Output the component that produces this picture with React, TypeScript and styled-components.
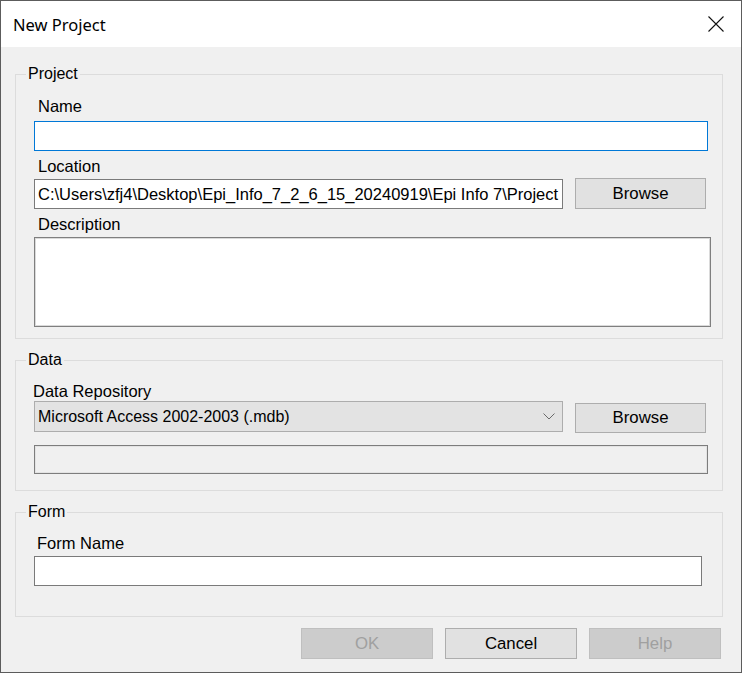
import React from "react";
import styled, { createGlobalStyle } from "styled-components";

const Global = createGlobalStyle`
  html, body { margin: 0; padding: 0; background: #ffffff; }
  * { box-sizing: border-box; }
`;

const Window = styled.div`
  width: 742px;
  height: 673px;
  border: 1px solid #5c5c5c;
  background: #f0f0f0;
  display: flex;
  flex-direction: column;
  font-family: "Liberation Sans", Arial, sans-serif;
  font-size: 16.5px;
  color: #000;
`;

const TitleBar = styled.div`
  height: 46px;
  flex: none;
  background: #ffffff;
  display: flex;
  align-items: center;
  justify-content: space-between;
  padding: 0 17px 0 12px;
`;

const Title = styled.span`
  font-family: "Noto Sans", "Open Sans", sans-serif;
  font-size: 16.5px;
  color: #000;
`;

const CloseIcon = styled.svg`
  width: 16px;
  height: 16px;
  display: block;
`;

const Content = styled.div`
  flex: 1;
  display: flex;
  flex-direction: column;
  padding: 18px 18px 13px 14px;
`;

const GroupBox = styled.fieldset<{ $gap?: number }>`
  margin: ${(p) => p.$gap ?? 0}px 0 0 0;
  padding: 0;
  border: 1px solid #dcdcdc;
  min-width: 0;
`;

const Legend = styled.legend`
  margin-left: 10px;
  padding: 0 2px;
  font-size: 16px;
  line-height: 18px;
`;

const GroupBody = styled.div<{ $bottom: number }>`
  display: flex;
  flex-direction: column;
  align-items: flex-start;
  padding: 0 0 ${(p) => p.$bottom}px 18px;
`;

const Label = styled.div<{ $top: number; $indent: number }>`
  margin-top: ${(p) => p.$top}px;
  margin-left: ${(p) => p.$indent}px;
  line-height: 18px;
  height: 18px;
  white-space: nowrap;
`;

const TextBox = styled.input<{ $top: number; $w: number; $focus?: boolean }>`
  margin: ${(p) => p.$top}px 0 0 0;
  width: ${(p) => p.$w}px;
  height: 30px;
  border: 1px solid ${(p) => (p.$focus ? "#0078d7" : "#7a7a7a")};
  background: #ffffff;
  padding: 0 0 0 3px;
  font-family: "Liberation Sans", Arial, sans-serif;
  font-size: 16.5px;
  color: #000;
  outline: none;
`;

const DisabledBox = styled.div`
  margin-top: 12px;
  width: 674px;
  height: 29px;
  border: 1px solid #7d7d7d;
  box-shadow: inset 0 0 0 1px #e3e3e3;
  background: #f0f0f0;
`;

const TextArea = styled.textarea`
  margin: 4px 0 0 0;
  width: 677px;
  height: 90px;
  border: 1px solid #7f7f7f;
  box-shadow: inset 0 0 0 1px #dadada;
  background: #ffffff;
  resize: none;
  outline: none;
  display: block;
`;

const Row = styled.div<{ $top: number }>`
  margin-top: ${(p) => p.$top}px;
  display: flex;
  align-items: flex-start;
  gap: 12px;
`;

const Combo = styled.div`
  width: 529px;
  height: 31px;
  border: 1px solid #adadad;
  background: #e3e3e3;
  display: flex;
  align-items: center;
  justify-content: space-between;
  padding: 0 7px 0 3px;
  font-size: 16px;
  white-space: nowrap;
`;

const Chevron = styled.svg`
  width: 12px;
  height: 7px;
  display: block;
`;

const Button = styled.button<{ $top?: number; $h?: number; $disabled?: boolean }>`
  margin-top: ${(p) => p.$top ?? 0}px;
  width: ${(p) => (p.$disabled !== undefined ? 132 : 131)}px;
  height: ${(p) => p.$h ?? 31}px;
  border: 1px solid ${(p) => (p.$disabled ? "#bfbfbf" : "#adadad")};
  background: ${(p) => (p.$disabled ? "#cccccc" : "#e1e1e1")};
  color: ${(p) => (p.$disabled ? "#a0a0a0" : "#000")};
  font-family: "Liberation Sans", Arial, sans-serif;
  font-size: 16.8px;
  padding: 0;
  border-radius: 0;
  display: flex;
  align-items: center;
  justify-content: center;
`;

const ButtonRow = styled.div`
  margin-top: 11px;
  display: flex;
  justify-content: flex-end;
  gap: 12px;
  padding-right: 2px;
`;

export default function App() {
  return (
    <>
      <Global />
      <Window>
        <TitleBar>
          <Title>New Project</Title>
          <CloseIcon viewBox="0 0 16 16">
            <path d="M0.5 0.5 L15.5 15.5 M15.5 0.5 L0.5 15.5" stroke="#111" strokeWidth="1.1" fill="none" />
          </CloseIcon>
        </TitleBar>
        <Content>
          <GroupBox>
            <Legend>Project</Legend>
            <GroupBody $bottom={11}>
              <Label $top={14} $indent={4}>Name</Label>
              <TextBox $top={6} $w={674} $focus defaultValue="" />
              <Label $top={6} $indent={4}>Location</Label>
              <Row $top={3}>
                <TextBox
                  $top={1}
                  $w={529}
                  readOnly
                  defaultValue={"C:\\Users\\zfj4\\Desktop\\Epi_Info_7_2_6_15_20240919\\Epi Info 7\\Project"}
                />
                <Button>Browse</Button>
              </Row>
              <Label $top={6} $indent={4}>Description</Label>
              <TextArea />
            </GroupBody>
          </GroupBox>

          <GroupBox $gap={12}>
            <Legend>Data</Legend>
            <GroupBody $bottom={16}>
              <Label $top={13} $indent={-1}>Data Repository</Label>
              <Row $top={1}>
                <Combo>
                  <span>Microsoft Access 2002-2003 (.mdb)</span>
                  <Chevron viewBox="0 0 12 7">
                    <path d="M0.5 0.5 L6 6 L11.5 0.5" stroke="#6a6a6a" strokeWidth="1" fill="none" />
                  </Chevron>
                </Combo>
                <Button $top={2} $h={30}>Browse</Button>
              </Row>
              <DisabledBox />
            </GroupBody>
          </GroupBox>

          <GroupBox $gap={12}>
            <Legend>Form</Legend>
            <GroupBody $bottom={30}>
              <Label $top={13} $indent={3}>Form Name</Label>
              <TextBox $top={4} $w={668} defaultValue="" />
            </GroupBody>
          </GroupBox>

          <ButtonRow>
            <Button $disabled>OK</Button>
            <Button $disabled={false}>Cancel</Button>
            <Button $disabled>Help</Button>
          </ButtonRow>
        </Content>
      </Window>
    </>
  );
}
